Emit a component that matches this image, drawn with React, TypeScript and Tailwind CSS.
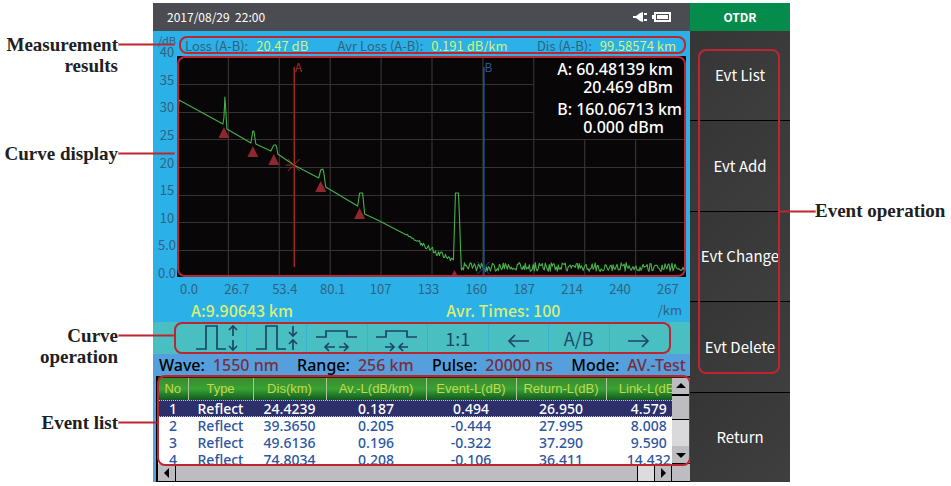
import type { ReactNode } from "react"

const yTicks = ["40", "35", "30", "25", "20", "15", "10", "5.0", "0.0"]
const xTicks = ["0.0", "26.7", "53.4", "80.1", "107", "133", "160", "187", "214", "240", "267"]

const results = [
    { label: "Loss (A-B):", value: "20.47 dB" },
    { label: "Avr Loss (A-B):", value: "0.191 dB/km" },
    { label: "Dis (A-B):", value: "99.58574 km" },
]

const settings = [
    { label: "Wave:", value: "1550 nm" },
    { label: "Range:", value: "256 km" },
    { label: "Pulse:", value: "20000 ns" },
    { label: "Mode:", value: "AV.-Test" },
]

const columns = ["No", "Type", "Dis(km)", "Av.-L(dB/km)", "Event-L(dB)", "Return-L(dB)", "Link-L(dB)"]

const events = [
    ["1", "Reflect", "24.4239", "0.187", "0.494", "26.950", "4.579"],
    ["2", "Reflect", "39.3650", "0.205", "-0.444", "27.995", "8.008"],
    ["3", "Reflect", "49.6136", "0.196", "-0.322", "37.290", "9.590"],
    ["4", "Reflect", "74.8034", "0.208", "-0.106", "36.411", "14.432"],
]

const menu = ["Evt List", "Evt Add", "Evt Change", "Evt Delete", "Return"]

// small seeded generator so that the noise floor is the same on every render
const noise = (seed: number) => {
    let s = seed
    return () => {
        s = (s * 16807) % 2147483647
        return s / 2147483647 - 0.5
    }
}

const buildTrace = () => {
    const rand = noise(4217)
    const points: [number, number][] = [
        [1, 59], [2, 44], [46, 68], [47, 62], [48, 41], [49, 56], [50, 73], [74, 87],
        [76, 75], [77, 75], [79, 88], [94, 95], [96, 91], [97, 89], [99, 89], [100, 92],
        [101, 98], [117, 109], [142, 122], [144, 114], [146, 113], [147, 116], [149, 131],
        [181, 150], [183, 137], [186, 137], [188, 158], [201, 164], [230, 179],
    ]
    for (let x = 231; x < 277; x += 1) {
        const base = x < 258 ? 179 + (x - 230) * 0.58 : 196 + (x - 258) * 0.38
        points.push([x, base + rand() * (x < 242 ? 2 : 6)])
    }
    points.push([277, 204], [278, 170], [279, 137], [282, 137], [283, 160], [284, 190], [285, 214])
    for (let x = 286; x < 509; x += 1) {
        points.push([x, 211 + rand() * 9])
    }
    return points.map(([x, y]) => `${x},${y.toFixed(1)}`).join(" ")
}

const markers = [[47, 71], [76, 90], [97, 98], [144, 125], [183, 152]]

const Chart = () => (
    <div className="relative bg-[#080606]">
        <svg className="block h-[221px] w-full" viewBox="0 0 510 221" preserveAspectRatio="none" fill="none">
            <g stroke="#343434" strokeWidth="1.2">
                {[51, 102, 153, 204, 255, 306, 357].map((x) => <path key={x} d={`M${x + 0.5} 0V221`} />)}
                {[408, 459].map((x) => <path key={x} d={`M${x + 0.5} 83V221`} />)}
                {[28, 56].map((y) => <path key={y} d={`M0 ${y + 0.5}H357`} />)}
                {[83, 111, 139, 166, 194].map((y) => <path key={y} d={`M0 ${y + 0.5}H510`} />)}
            </g>
            <polyline points={buildTrace()} stroke="#48b04a" strokeWidth="1.1" strokeLinejoin="round" />
            <g fill="#8e2730">
                {markers.map(([x, y]) => <path key={x} d={`M${x} ${y}L${x + 5.5} ${y + 11}H${x - 5.5}Z`} />)}
                <path d="M278 214L282 221H274Z" />
            </g>
            <path d="M117.5 11V211" stroke="#9c2622" strokeWidth="1.5" />
            <path d="M111 103L123 115M123 103L111 115M109 109H115" stroke="#a72a22" />
            <path d="M307.5 11V221" stroke="#28528f" strokeWidth="1.5" />
            <path d="M301 206L313 218M313 206L301 218" stroke="#2a5290" />
            <text x="118" y="16" fontSize="12" fill="#a72a22" className="font-['Noto_Sans_CJK_SC',sans-serif]">A</text>
            <text x="308" y="16" fontSize="12" fill="#2c5596" className="font-['Noto_Sans_CJK_SC',sans-serif]">B</text>
        </svg>
        <div className="absolute top-1 right-1 font-['Noto_Sans',sans-serif] text-base leading-[18px] font-medium whitespace-pre text-white">
            <p>A: 60.48139 km</p>
            <p className="pl-[26px]">20.469 dBm</p>
            <p className="mt-1">B: 160.06713 km</p>
            <p className="pl-[26px]">0.000 dBm</p>
        </div>
        <Outline className="inset-0" />
    </div>
)

const Outline = ({ className }: { className: string }) => (
    <div className={`pointer-events-none absolute rounded-lg border-2 border-[#bd2531] ${className}`} />
)

const Icon = ({ children }: { children: ReactNode }) => (
    <svg width="44" height="28" viewBox="0 0 44 28" fill="none" stroke="#1d4668" strokeWidth="1.7">
        {children}
    </svg>
)

const tools: { name: string; icon: ReactNode }[] = [
    {
        name: "Zoom in vertically",
        icon: <Icon><path d="M2 25H12V2H23V25H32M39 2V12M35 6L39 2L43 6M39 16V26M35 22L39 26L43 22" /></Icon>,
    },
    {
        name: "Zoom out vertically",
        icon: <Icon><path d="M2 25H12V2H23V25H32M39 2V12M35 8L39 12L43 8M39 26V16M35 20L39 16L43 20" /></Icon>,
    },
    {
        name: "Zoom in horizontally",
        icon: <Icon><path d="M1 13H11V7H32V13H42M10 23H20M14 19L10 23L14 27M24 23H33M29 19L33 23L29 27" /></Icon>,
    },
    {
        name: "Zoom out horizontally",
        icon: <Icon><path d="M1 13H11V7H32V13H42M10 23H19M15 19L19 23L15 27M24 23H33M28 19L24 23L28 27" /></Icon>,
    },
    { name: "Original size", icon: "1:1" },
    { name: "Move left", icon: <Icon><path d="M33 17H13M19 11L13 17L19 23" /></Icon> },
    { name: "Switch cursor", icon: "A/B" },
    { name: "Move right", icon: <Icon><path d="M11 17H31M25 11L31 17L25 23" /></Icon> },
]

const ScrollButton = ({ name, path, className }: { name: string; path: string; className: string }) => (
    <button type="button" aria-label={name} className={`flex shrink-0 items-center justify-center border-black bg-[#bdbcc0] ${className}`}>
        <svg width="10" height="10" viewBox="0 0 10 10" fill="#000"><path d={path} /></svg>
    </button>
)

const EventList = () => (
    <div className="relative border-l-2 border-black bg-[#c2c1c5]">
        <div className="flex h-[88px] border-t-2 border-[#33201c]">
            <div className="min-w-0 flex-1 overflow-hidden bg-white">
                <table className="w-[calc(100%+20px)] table-fixed border-collapse text-center whitespace-nowrap">
                    <colgroup>
                        <col className="w-[30px]" />
                        <col className="w-[65px]" />
                        <col className="w-[73px]" />
                        <col className="w-[100px]" />
                        <col className="w-[90px]" />
                        <col className="w-[90px]" />
                        <col />
                    </colgroup>
                    <thead>
                        <tr className="h-[22px] bg-linear-to-b from-[#3c8a2c] via-[#38a334] to-[#12581f]">
                            {columns.map((column) => (
                                <th key={column} className="border-r border-[#a9c79b] p-0 font-['Liberation_Sans',sans-serif] text-[13px] leading-4 font-normal text-[#c5d84b]">
                                    {column}
                                </th>
                            ))}
                        </tr>
                    </thead>
                    <tbody className="font-['Noto_Sans',sans-serif] text-[14px] leading-4 font-medium">
                        {events.map((row, i) => (
                            <tr key={row[0]} className={i === 0 ? "h-[17px] bg-[#2d2f6b] text-white outline-1 -outline-offset-1 outline-dotted outline-[#c9c9a8]" : "h-[17px] text-[#2c56a0]"}>
                                {row.map((cell, j) => <td key={j} className="p-0">{cell}</td>)}
                            </tr>
                        ))}
                    </tbody>
                </table>
            </div>
            <div className="flex w-[18px] flex-col bg-[#d9d9db]">
                <ScrollButton name="Scroll up" path="M0 7L5 2L10 7Z" className="h-[18px] border-b-2" />
                <div className="h-6 border-b border-black bg-[#bdbcc0]" />
                <div className="flex-1" />
                <ScrollButton name="Scroll down" path="M0 3L5 8L10 3Z" className="h-[18px] border-b" />
            </div>
        </div>
        <div className="flex h-[18px] border-b border-black bg-[#bdbcc0] pr-[18px]">
            <ScrollButton name="Scroll left" path="M7 0L2 5L7 10Z" className="w-[18px] border-r" />
            <div className="flex-1 border-r" />
            <div className="w-4 bg-[#dcdcde]" />
            <ScrollButton name="Scroll right" path="M3 0L8 5L3 10Z" className="w-[18px] border-r border-l" />
        </div>
        <Outline className="-top-px -right-px bottom-4 -left-px" />
    </div>
)

const Callout = ({ children, className, line }: { children: ReactNode; className: string; line: string }) => (
    <div className={`flex ${className}`}>
        <p className="w-[118px] shrink-0 text-right">{children}</p>
        <div className={`mt-[10px] h-px shrink-0 bg-[#bd2531] outline-[#bd2531]/50 outline-1 ${line}`} />
    </div>
)

export default function App() {
    return (
        <main className="flex items-start bg-white font-['Noto_Sans_CJK_SC',sans-serif]">
            <aside className="relative z-10 w-[153px] shrink-0 pt-[34px] font-['Liberation_Serif',serif] text-[19px] leading-[21px] font-bold text-[#202020]">
                <Callout className="h-[109px]" line="ml-px w-[55px]">Measurement<br />results</Callout>
                <Callout className="h-[182px]" line="ml-px w-[55px]">Curve display</Callout>
                <Callout className="h-[87px]" line="ml-px w-[55px]">Curve<br />operation</Callout>
                <Callout className="h-6" line="ml-px w-[37px]">Event list</Callout>
            </aside>

            <section className="mt-[3px] flex min-w-0 flex-1">
                <div className="flex min-w-0 flex-1 flex-col bg-[#559fdc]">
                    <header className="flex h-7 items-center justify-between bg-[#4b4c51] pr-[18px] pl-[14px] text-[12px] text-white">
                        <time className="whitespace-pre">2017/08/29  22:00</time>
                        <svg width="39" height="12" viewBox="0 0 39 12" fill="#fff">
                            <path d="M0 5H3L7 2L10 1V11L7 10L3 7H0ZM11 2H14V4H11ZM11 8H14V10H11Z" />
                            <path d="M21 1H38V11H21V8H19V4H21ZM23 3V9H36V3Z" fillRule="evenodd" />
                            <path d="M24 4H35V8H24Z" />
                        </svg>
                    </header>

                    <div className="bg-[#2bb0e8] text-[13px] leading-4 text-[#31637d]">
                        <div className="flex">
                            <div className="flex w-6 shrink-0 flex-col pt-1 pl-1 text-center">
                                <span className="h-[11px] text-[11px] leading-[11px]">/dB</span>
                                <div className="flex h-[233px] flex-col justify-between leading-3">
                                    {yTicks.map((tick) => <span key={tick}>{tick}</span>)}
                                </div>
                            </div>
                            <div className="min-w-0 flex-1 pr-1">
                                <dl className="relative mt-[5px] mb-[2px] ml-[2px] flex h-[18px] items-end justify-between pr-[10px] pl-[6px]">
                                    {results.map(({ label, value }) => (
                                        <div key={label} className="flex gap-2">
                                            <dt>{label}</dt>
                                            <dd className="text-[#d9ee77]">{value}</dd>
                                        </div>
                                    ))}
                                    <Outline className="inset-0" />
                                </dl>
                                <Chart />
                                <div className="-ml-[6px] flex justify-between pt-1 text-center">
                                    {xTicks.map((tick) => <span key={tick} className="w-9">{tick}</span>)}
                                </div>
                            </div>
                        </div>
                        <div className="flex h-[25px] items-center pr-2 pl-[38px] text-base leading-6 font-medium text-[#d9ee77]">
                            <span className="w-[52%]">A:9.90643 km</span>
                            <span className="flex-1">Avr. Times: 100</span>
                            <span className="text-[13px] font-normal text-[#31637d]">/km</span>
                        </div>
                    </div>

                    <div className="relative flex h-8 bg-[#49bfc1] pr-5 pl-[33px]">
                        {tools.map(({ name, icon }) => (
                            <button key={name} type="button" aria-label={name} className="flex flex-1 items-center justify-center border-r border-[#38b2cf] text-[18px] text-[#1d4668] last:border-r-0">
                                {icon}
                            </button>
                        ))}
                        <Outline className="top-0 right-[19px] bottom-0 left-[21px]" />
                    </div>

                    <dl className="flex h-[22px] items-center justify-between pr-1 pl-[6px] font-['Noto_Sans',sans-serif] text-base leading-5 font-medium whitespace-nowrap">
                        {settings.map(({ label, value }) => (
                            <div key={label} className="flex gap-2">
                                <dt className="text-black">{label}</dt>
                                <dd className="text-[#7b2d3d]">{value}</dd>
                            </div>
                        ))}
                    </dl>
                    <div className="pl-[3px]">
                        <EventList />
                    </div>
                </div>

                <nav className="relative flex w-[100px] shrink-0 flex-col">
                    <h1 className="flex h-7 items-center justify-center bg-[#058b4b] text-[12px] font-bold text-white">OTDR</h1>
                    {menu.map((item) => (
                        <button key={item} type="button" className="flex-1 border-t border-black bg-linear-to-br from-[#353535] to-[#3f3f3f] text-[15px] whitespace-nowrap text-white first-of-type:border-t-0">
                            {item}
                        </button>
                    ))}
                    <Outline className="top-[46px] right-[10px] bottom-[108px] left-2" />
                </nav>
            </section>

            <aside className="relative -ml-[11px] flex w-[172px] shrink-0 items-center pt-[201px] font-['Liberation_Serif',serif] text-[19px] leading-5 font-bold text-[#202020]">
                <div className="h-px w-9 shrink-0 bg-[#bd2531] outline-1 outline-[#bd2531]/50" />
                <p className="whitespace-nowrap">Event operation</p>
            </aside>
        </main>
    )
}
